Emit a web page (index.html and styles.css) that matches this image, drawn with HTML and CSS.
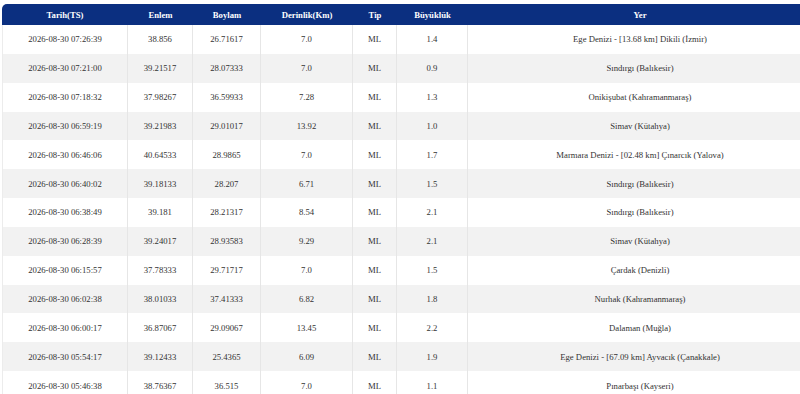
FILE: index.html
```html
<!DOCTYPE html>
<html lang="tr">
<head>
<meta charset="utf-8">
<title>Son Depremler</title>
<link rel="stylesheet" href="styles.css">
</head>
<body>
<div class="wrap">
<table class="quakes">
<colgroup>
<col class="c-date"><col class="c-lat"><col class="c-lon"><col class="c-dep"><col class="c-type"><col class="c-mag"><col class="c-loc">
</colgroup>
<thead>
<tr><th>Tarih(TS)</th><th>Enlem</th><th>Boylam</th><th>Derinlik(Km)</th><th>Tip</th><th>Büyüklük</th><th>Yer</th></tr>
</thead>
<tbody>
<tr><td>2026-08-30 07:26:39</td><td>38.856</td><td>26.71617</td><td>7.0</td><td>ML</td><td>1.4</td><td>Ege Denizi - [13.68 km] Dikili (İzmir)</td></tr>
<tr><td>2026-08-30 07:21:00</td><td>39.21517</td><td>28.07333</td><td>7.0</td><td>ML</td><td>0.9</td><td>Sındırgı (Balıkesir)</td></tr>
<tr><td>2026-08-30 07:18:32</td><td>37.98267</td><td>36.59933</td><td>7.28</td><td>ML</td><td>1.3</td><td>Onikişubat (Kahramanmaraş)</td></tr>
<tr><td>2026-08-30 06:59:19</td><td>39.21983</td><td>29.01017</td><td>13.92</td><td>ML</td><td>1.0</td><td>Simav (Kütahya)</td></tr>
<tr><td>2026-08-30 06:46:06</td><td>40.64533</td><td>28.9865</td><td>7.0</td><td>ML</td><td>1.7</td><td>Marmara Denizi - [02.48 km] Çınarcık (Yalova)</td></tr>
<tr><td>2026-08-30 06:40:02</td><td>39.18133</td><td>28.207</td><td>6.71</td><td>ML</td><td>1.5</td><td>Sındırgı (Balıkesir)</td></tr>
<tr><td>2026-08-30 06:38:49</td><td>39.181</td><td>28.21317</td><td>8.54</td><td>ML</td><td>2.1</td><td>Sındırgı (Balıkesir)</td></tr>
<tr><td>2026-08-30 06:28:39</td><td>39.24017</td><td>28.93583</td><td>9.29</td><td>ML</td><td>2.1</td><td>Simav (Kütahya)</td></tr>
<tr><td>2026-08-30 06:15:57</td><td>37.78333</td><td>29.71717</td><td>7.0</td><td>ML</td><td>1.5</td><td>Çardak (Denizli)</td></tr>
<tr><td>2026-08-30 06:02:38</td><td>38.01033</td><td>37.41333</td><td>6.82</td><td>ML</td><td>1.8</td><td>Nurhak (Kahramanmaraş)</td></tr>
<tr><td>2026-08-30 06:00:17</td><td>36.87067</td><td>29.09067</td><td>13.45</td><td>ML</td><td>2.2</td><td>Dalaman (Muğla)</td></tr>
<tr><td>2026-08-30 05:54:17</td><td>39.12433</td><td>25.4365</td><td>6.09</td><td>ML</td><td>1.9</td><td>Ege Denizi - [67.09 km] Ayvacık (Çanakkale)</td></tr>
<tr><td>2026-08-30 05:46:38</td><td>38.76367</td><td>36.515</td><td>7.0</td><td>ML</td><td>1.1</td><td>Pınarbaşı (Kayseri)</td></tr>
</tbody>
</table>
</div>
</body>
</html>
```

FILE: styles.css
```css
html, body {
  margin: 0;
  padding: 0;
  background: #ffffff;
  overflow: hidden;
}
body {
  font-family: "Liberation Serif", "Times New Roman", serif;
  color: #333333;
}
.wrap {
  padding: 4px 0 0 2px;
  width: 812px;
}
.quakes {
  width: 810px;
  border-collapse: separate;
  border-spacing: 0;
  table-layout: fixed;
  font-size: 8.7px;
}
.c-date { width: 126px; }
.c-lat { width: 65px; }
.c-lon { width: 68px; }
.c-dep { width: 92px; }
.c-type { width: 44px; }
.c-mag { width: 71px; }
.c-loc { width: auto; }
.quakes thead th {
  background: #0b2f80;
  color: #ffffff;
  font-weight: bold;
  height: 21px;
  padding: 0;
  text-align: center;
  vertical-align: middle;
}
.quakes thead th:first-child {
  border-top-left-radius: 5px;
}
.quakes tbody td {
  height: 28.85px;
  padding: 0;
  text-align: center;
  vertical-align: middle;
  border-right: 1px solid #e6e6e6;
  white-space: nowrap;
}
.quakes tbody td:first-child {
  border-left: 1px solid #ececec;
}
.quakes tbody td:last-child {
  border-right: none;
}
.quakes tbody tr:nth-child(even) td {
  background: #f2f2f2;
}
```
